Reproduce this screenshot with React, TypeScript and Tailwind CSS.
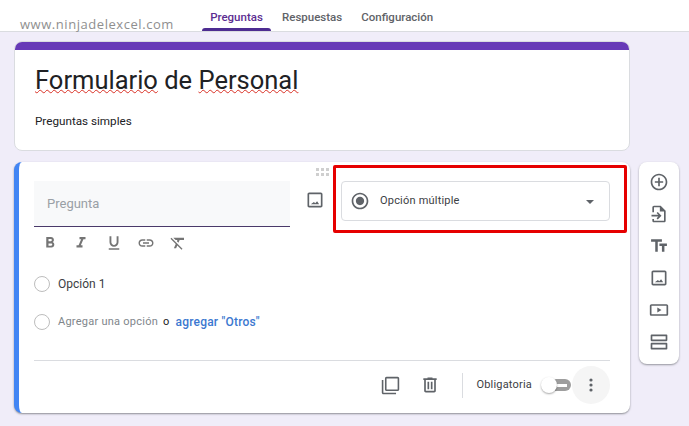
import React from "react";

const roboto = "font-['Roboto',sans-serif]";

const Icon: React.FC<{ d: string; size?: number; className?: string }> = ({ d, size = 24, className = "" }) => (
  <svg width={size} height={size} viewBox="0 0 24 24" fill="currentColor" className={className}>
    <path d={d} />
  </svg>
);

const paths = {
  add: "M13 7h-2v4H7v2h4v4h2v-4h4v-2h-4V7zm-1-5C6.48 2 2 6.48 2 12s4.48 10 10 10 10-4.48 10-10S17.52 2 12 2zm0 18c-4.41 0-8-3.59-8-8s3.59-8 8-8 8 3.59 8 8-3.59 8-8 8z",
  image: "M19 5v14H5V5h14m0-2H5c-1.1 0-2 .9-2 2v14c0 1.1.9 2 2 2h14c1.1 0 2-.9 2-2V5c0-1.1-.9-2-2-2zm-4.5 10.5l-2.2 2.3-1.6-1.4L7 17h10l-2.5-3.5z",
  radio: "M12 7c-2.76 0-5 2.24-5 5s2.24 5 5 5 5-2.24 5-5-2.24-5-5-5zm0-5C6.48 2 2 6.48 2 12s4.48 10 10 10 10-4.48 10-10S17.52 2 12 2zm0 18c-4.42 0-8-3.58-8-8s3.58-8 8-8 8 3.58 8 8-3.58 8-8 8z",
  copy: "M3 5H1v16c0 1.1.9 2 2 2h16v-2H3V5zm18-4H7c-1.1 0-2 .9-2 2v14c0 1.1.9 2 2 2h14c1.1 0 2-.9 2-2V3c0-1.1-.9-2-2-2zm0 16H7V3h14v14z",
  trash: "M15 4V3H9v1H4v2h1v13c0 1.1.9 2 2 2h10c1.1 0 2-.9 2-2V6h1V4h-5zm2 15H7V6h10v13zM9 8h2v9H9zm4 0h2v9h-2z",
  text: "M2.5 4v3h5v12h3V7h5V4h-13zm19 5h-9v3h3v7h3v-7h3V9z",
  video: "M21 5H3c-1.1 0-2 .9-2 2v10c0 1.1.9 2 2 2h18c1.1 0 2-.9 2-2V7c0-1.1-.9-2-2-2zm0 12H3V7h18v10zM10 9v6l5-3z",
  section: "M3 3h18c.6 0 1 .4 1 1v6c0 .6-.4 1-1 1H3c-.6 0-1-.4-1-1V4c0-.6.4-1 1-1zm1 2v4h16V5H4zm-1 8h18c.6 0 1 .4 1 1v6c0 .6-.4 1-1 1H3c-.6 0-1-.4-1-1v-6c0-.6.4-1 1-1zm1 2v4h16v-4H4z",
  importFile: "M6 2h8l6 6v12c0 1.1-.9 2-2 2H6c-1.1 0-2-.9-2-2v-2h2v2h12V9h-5V4H6v6H4V4c0-1.1.9-2 2-2zM3 13h8.2l-2.1-2.1L10.5 9.5l4.5 4.5-4.5 4.5-1.4-1.4 2.1-2.1H3v-2z",
  bold: "M15.6 10.79c.97-.67 1.65-1.77 1.65-2.79 0-2.26-1.75-4-4-4H7v14h7.04c2.09 0 3.71-1.7 3.71-3.79 0-1.52-.86-2.82-2.15-3.42zM10 6.5h3c.83 0 1.5.67 1.5 1.5s-.67 1.5-1.5 1.5h-3v-3zm3.5 9H10v-3h3.5c.83 0 1.5.67 1.5 1.5s-.67 1.5-1.5 1.5z",
  italic: "M10 4v3h2.21l-3.42 8H6v3h8v-3h-2.21l3.42-8H18V4z",
  underline: "M12 17c3.31 0 6-2.69 6-6V3h-2.5v8c0 1.93-1.57 3.5-3.5 3.5S8.5 12.93 8.5 11V3H6v8c0 3.31 2.69 6 6 6zm-7 2v2h14v-2H5z",
  link: "M3.9 12c0-1.71 1.39-3.1 3.1-3.1h4V7H7c-2.76 0-5 2.24-5 5s2.24 5 5 5h4v-1.9H7c-1.71 0-3.1-1.39-3.1-3.1zM8 13h8v-2H8v2zm9-6h-4v1.9h4c1.71 0 3.1 1.39 3.1 3.1s-1.39 3.1-3.1 3.1h-4V17h4c2.76 0 5-2.24 5-5s-2.24-5-5-5z",
  clear: "M3.27 5L2 6.27l6.97 6.97L6.5 19h3l1.57-3.66L16.73 21 18 19.73 3.55 5.27 3.27 5zM6 5v.18L8.82 8h2.4l-.72 1.68 2.1 2.1L14.21 8H20V5H6z",
};

const Header = () => (
  <div className="relative h-[32px] bg-white border-b border-[#dadce0] flex justify-start pl-[202px] text-[11.5px] font-medium text-[#5f6368]">
    <div className="relative w-[69px] flex justify-center pt-[9px] text-[#5c2d91]">
      Preguntas
      <div className="absolute left-0 right-0 bottom-0 h-[3px] rounded-t-[3px] bg-[#4d2c91]" />
    </div>
    <div className="ml-[11px] pt-[9px]">Respuestas</div>
    <div className="ml-[19px] pt-[9px]">Configuración</div>
    <div className="absolute left-[20px] top-[15px] font-['Open_Sans',sans-serif] font-normal text-[13px] tracking-[0.55px] text-[#8f8f8f]">
      www.ninjadelexcel.com
    </div>
  </div>
);

const TitleCard = () => (
  <div className="h-[110px] rounded-lg bg-white border border-[#dadce0] overflow-hidden">
    <div className="h-[8px] bg-[#673ab7]" />
    <div className="pl-[20px] pt-[13px]">
      <div className="text-[25.5px] leading-[34px] text-[#202124]">
        <span className="underline decoration-wavy decoration-[#d93025] decoration-1 underline-offset-0">Formulario</span>{" "}
        de{" "}
        <span className="underline decoration-wavy decoration-[#d93025] decoration-1 underline-offset-0">Personal</span>
      </div>
      <div className="mt-[16px] text-[11.7px] leading-[16px] text-[#202124]">Preguntas simples</div>
    </div>
  </div>
);

const Circle = () => <div className="w-[16px] h-[16px] rounded-full border border-[#bdbdbd] shrink-0" />;

const QuestionCard = () => (
  <div className="relative mt-[11px] h-[251px] rounded-lg bg-white border-l-[5px] border-[#4285f4] shadow-[0_1px_2px_rgba(60,64,67,0.55)] flex flex-col pl-[15px] pr-[20px]">
    <div className="absolute left-[297px] top-[6px] grid grid-cols-3 gap-[2px]">
      {Array.from({ length: 6 }).map((_, i) => (
        <div key={i} className="w-[3px] h-[3px] bg-[#cfcfcf]" />
      ))}
    </div>
    <div className="flex mt-[19px] items-start">
      <div className="w-[256px] h-[46px] bg-[#f8f9fa] border-b border-[#4a3a6a] pl-[13px] pt-[14px] text-[13px] leading-[17px] text-[#9aa0a6]">
        Pregunta
      </div>
      <Icon d={paths.image} size={20} className="text-[#5f6368] ml-[15px] mt-[9px]" />
      <div className="ml-[16px] w-[269px] h-[40px] rounded border border-[#dadce0] flex items-center pl-[8px] pr-[15px] text-[11px] tracking-[0.2px] text-[#3c4043]">
        <Icon d={paths.radio} size={20} className="text-[#5f6368]" />
        <span className="ml-[10px]">Opción múltiple</span>
        <svg width="8" height="4" viewBox="0 0 10 5" className="ml-auto mt-[2px] text-[#5f6368]" fill="currentColor">
          <path d="M0 0l5 5 5-5z" />
        </svg>
      </div>
    </div>
    <div className="flex items-center mt-[6px] h-[20px] text-[#757575]">
      <Icon d={paths.bold} size={18} className="ml-[7px]" />
      <Icon d={paths.italic} size={18} className="ml-[13px]" />
      <Icon d={paths.underline} size={18} className="ml-[15px]" />
      <Icon d={paths.link} size={18} className="ml-[14px]" />
      <Icon d={paths.clear} size={18} className="ml-[14px]" />
    </div>
    <div className="flex items-center mt-[21px] h-[20px] text-[12px] text-[#3c4043]">
      <Circle />
      <span className="ml-[8px]">Opción 1</span>
    </div>
    <div className="flex items-center mt-[18px] h-[20px] text-[11px] tracking-[0.25px]">
      <Circle />
      <span className="ml-[8px] text-[#80868b]">Agregar una opción</span>
      <span className="ml-[5px] text-[#202124]">o</span>
      <span className="ml-[6px] text-[12px] tracking-[0.2px] font-medium text-[#3b78d0]">agregar "Otros"</span>
    </div>
    <div className="mt-[28px] pb-[4px] border-t border-[#dadce0] flex-1 flex items-center justify-end">
      <Icon d={paths.copy} size={19} className="text-[#5f6368]" />
      <Icon d={paths.trash} size={20} className="text-[#5f6368] ml-[20px]" />
      <div className="w-px h-[25px] bg-[#dadce0] ml-[22px]" />
      <span className="ml-[13px] text-[11px] tracking-[0.2px] text-[#3c4043]">Obligatoria</span>
      <div className="relative ml-[9px] mr-[1px] w-[30px] h-[14px] flex items-center">
        <div className="absolute right-0 w-[22px] h-[12px] rounded-full bg-[#9e9e9e]" />
        <div className="absolute right-[4px] w-[10px] h-[3px] bg-white" />
        <div className="absolute left-0 w-[16px] h-[16px] rounded-full bg-white shadow-[0_1px_2px_rgba(0,0,0,0.35)]" />
      </div>
      <div className="w-[38px] h-[38px] rounded-full bg-[#f5f5f5] flex items-center justify-center">
        <svg width="4" height="14" viewBox="0 0 4 14" fill="#5f6368">
          <circle cx="2" cy="2" r="1.6" />
          <circle cx="2" cy="7" r="1.6" />
          <circle cx="2" cy="12" r="1.6" />
        </svg>
      </div>
    </div>
    {/* marca roja sobre el selector */}
    <div className="absolute left-[314px] top-[3px] w-[294px] h-[68px] border-[3px] border-[#e60000] rounded-[2px]" />
  </div>
);

const SideBar = () => (
  <div className="ml-[9px] mt-[130px] w-[40px] h-[202px] rounded-lg bg-white shadow-[0_1px_2px_rgba(60,64,67,0.5)] flex flex-col items-center pt-[10px] text-[#5f6368]">
    <div className="h-[32px] flex items-start justify-center w-full"><Icon d={paths.add} size={20} /></div>
    <div className="h-[32px] flex items-start justify-center w-full"><Icon d={paths.importFile} size={20} /></div>
    <div className="h-[32px] flex items-start justify-center w-full"><Icon d={paths.text} size={20} /></div>
    <div className="h-[32px] flex items-start justify-center w-full"><Icon d={paths.image} size={20} /></div>
    <div className="h-[32px] flex items-start justify-center w-full"><Icon d={paths.video} size={20} /></div>
    <div className="h-[32px] flex items-start justify-center w-full"><Icon d={paths.section} size={20} /></div>
  </div>
);

export default function App() {
  return (
    <div className={`w-[689px] h-[426px] overflow-hidden bg-[#f0edf9] ${roboto}`}>
      <Header />
      <div className="flex pl-[14px]">
        <div className="w-[616px] pt-[9px]">
          <TitleCard />
          <QuestionCard />
        </div>
        <SideBar />
      </div>
    </div>
  );
}
